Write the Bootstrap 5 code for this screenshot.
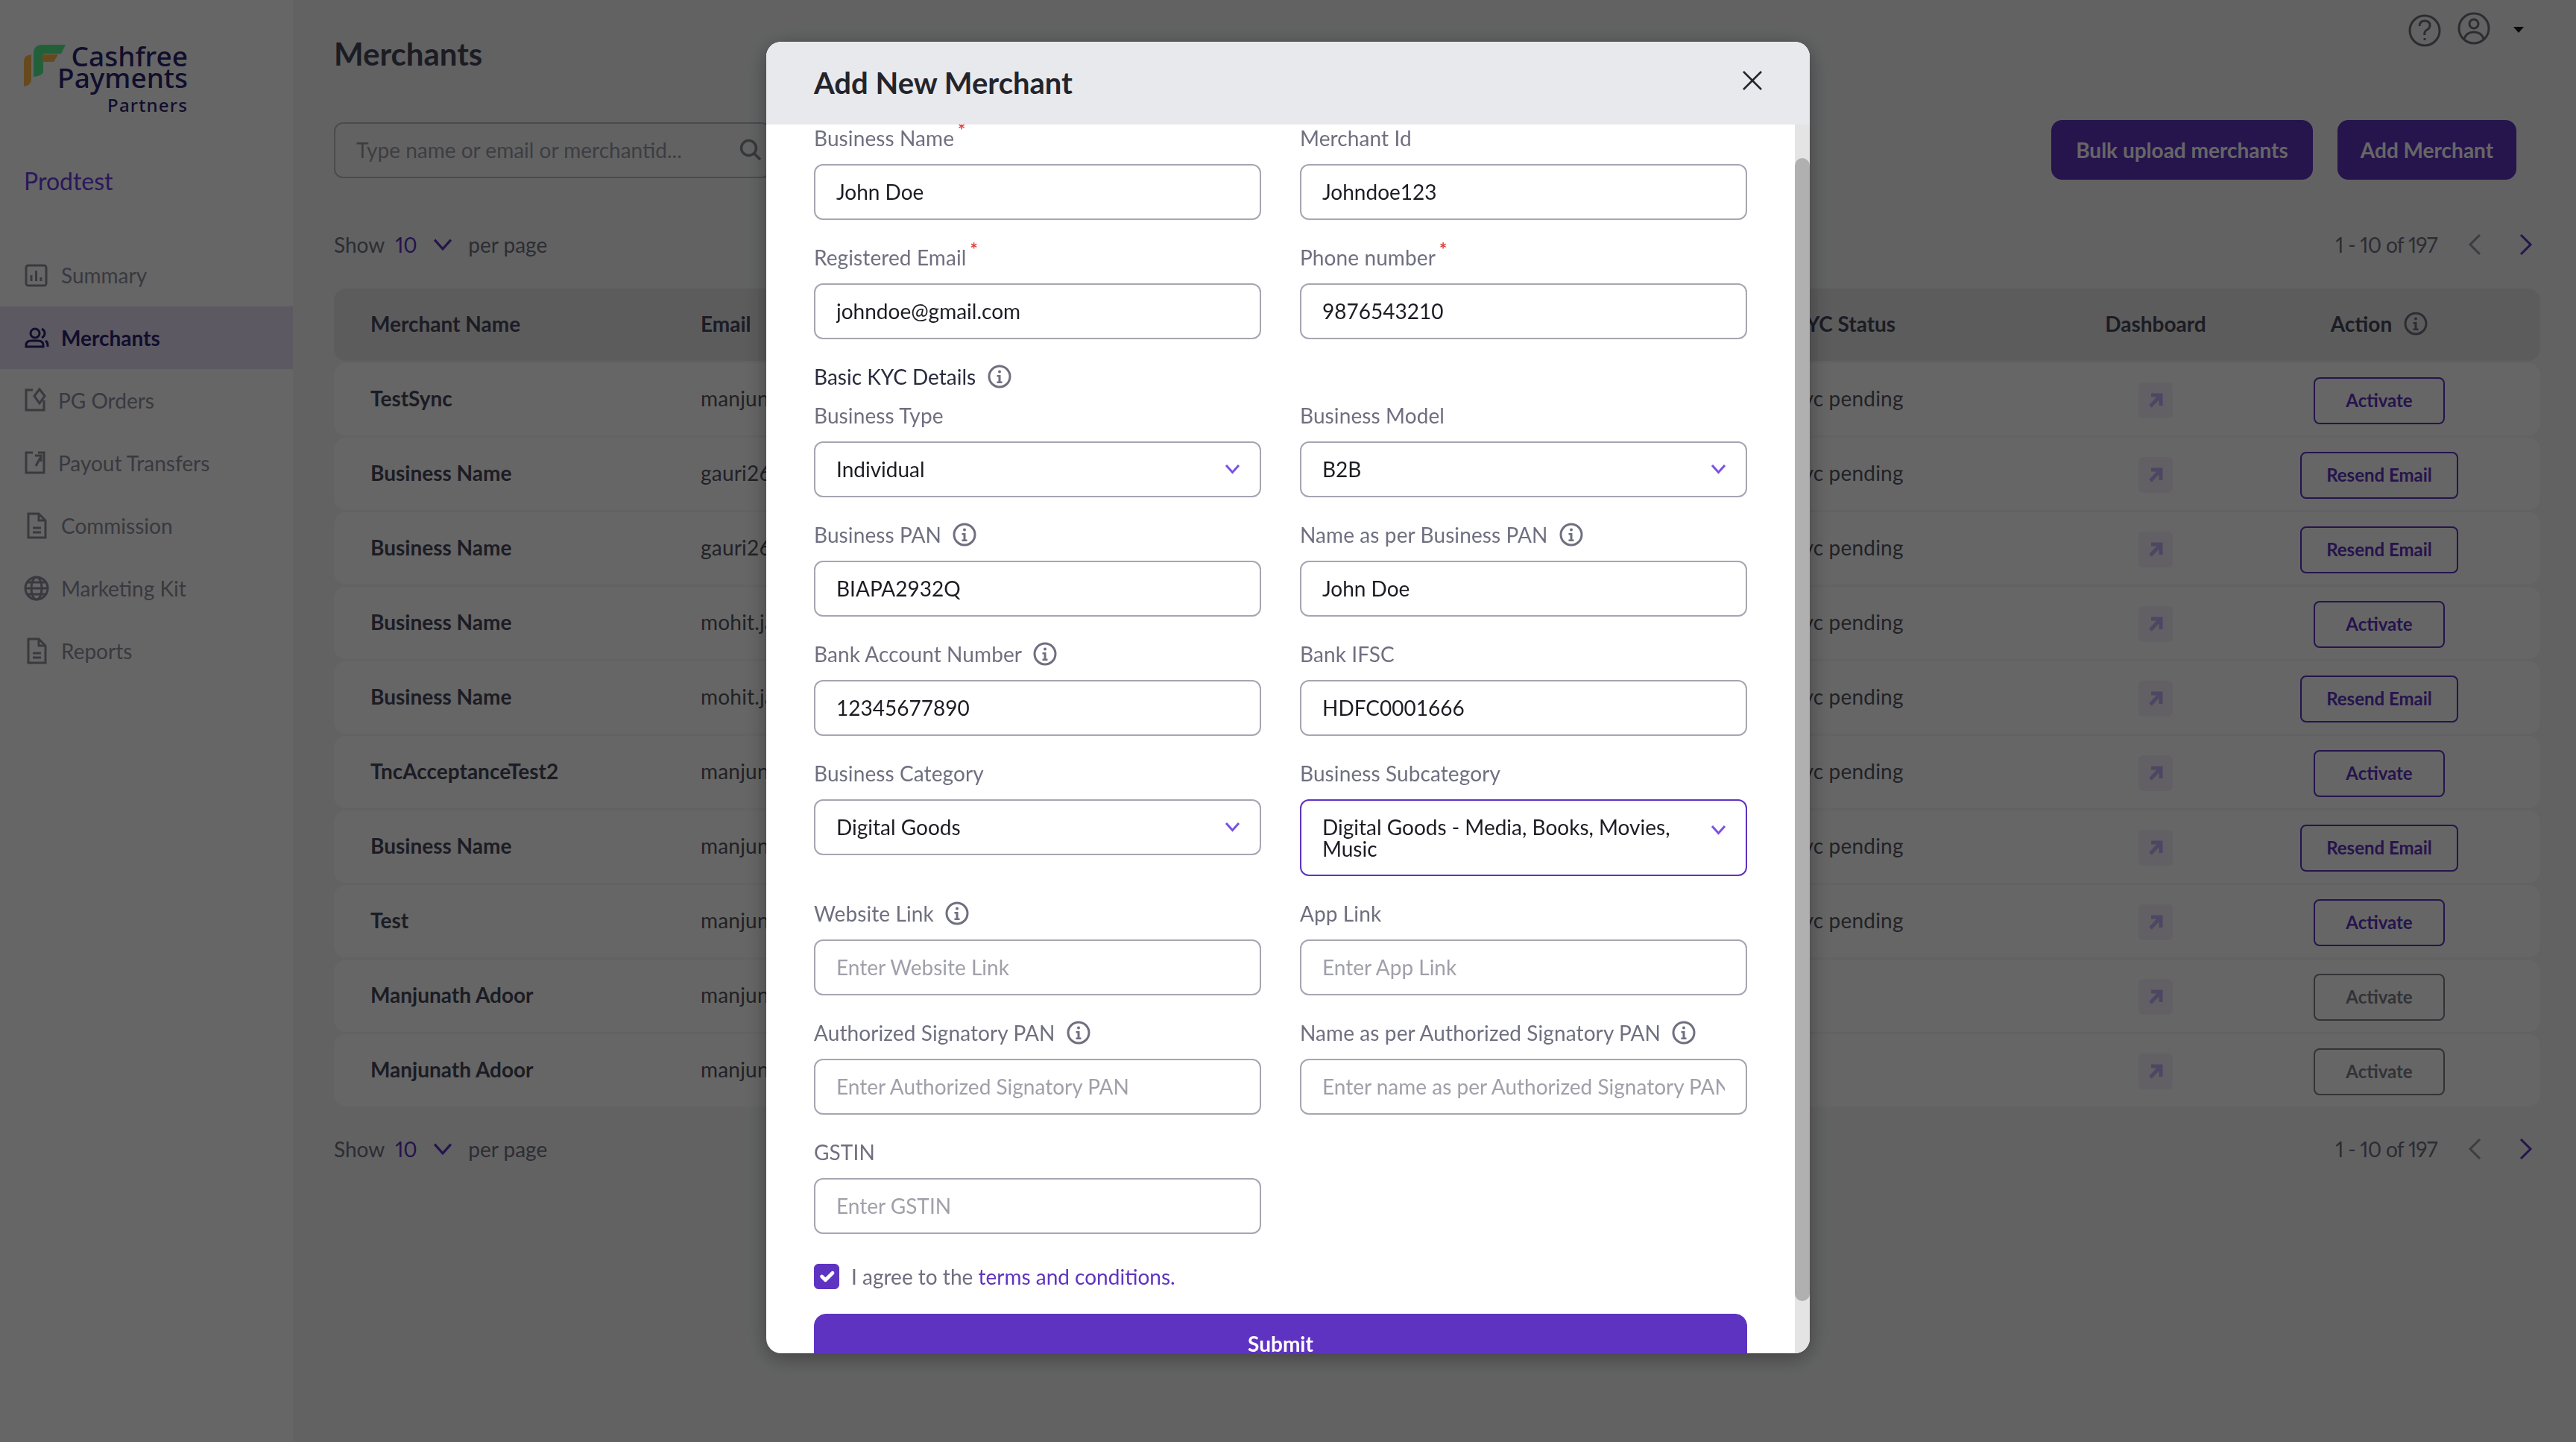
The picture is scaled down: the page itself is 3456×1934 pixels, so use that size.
<!DOCTYPE html>
<html lang="en">
<head>
<meta charset="utf-8">
<title>Merchants</title>
<link href="https://cdn.jsdelivr.net/npm/bootstrap@5.3.0/dist/css/bootstrap.min.css" rel="stylesheet">
<style>
html,body{height:100%;overflow:hidden}
body{font-family:Lato,"Liberation Sans",sans-serif;font-size:28px;background:#f5f6f8;color:#2a2a3a}
.app-shell{height:1934px}
.side-nav{width:393px;flex:none;background:#fff}
.brand-wrap{display:grid;width:220px;margin:60px 0 0 32px;font-family:"Noto Sans",sans-serif;color:#2b2470;text-align:right;font-weight:500}
.brand-wrap>*{grid-area:1/1}
.brand-mark{width:56px;height:56px}
.brand-text{line-height:29px;font-size:37px}
.brand-sub{font-size:24px;letter-spacing:1.2px;line-height:30px;margin-top:8px}
.brand-sub,.brand-text{display:block}
.org-name{margin:67px 0 0 32px;font-size:32px;line-height:40px;color:#6a3ee0}
.nav-stack{margin-top:64px}
.nav-entry{height:84px;padding-left:32px;gap:16px;color:#8f8f9e;font-size:28px}
.nav-entry.tight{gap:12px}
.nav-entry svg{width:34px;height:36px;flex:none;stroke:currentColor;fill:none;stroke-width:3}
.nav-entry.is-on{background:#e6dff4;color:#2b2470;font-weight:700}
.page-main{min-width:0;padding:0 48px 0 55px}
.top-row{height:161px}
.page-title{font-size:42px;font-weight:700;line-height:52px;margin:46px 0 0;color:#48485a}
.top-icons{gap:20px;margin:16px 22px 0 0;color:#70707c}
.top-icons svg{width:46px;height:48px;fill:none;stroke:currentColor;stroke-width:3}
.top-caret{width:0;height:0;border:7px solid transparent;border-top:8px solid #1a1a1a;margin:20px 0 0 10px}
.tool-row{height:80px}
.search-box{width:586px;height:75px;border:2px solid #bcbcc4;border-radius:12px;padding:0 10px 0 28px;color:#9a9aa4;background:transparent}
.search-box svg{width:30px;height:30px;fill:none;stroke:#8c8c96;stroke-width:3.500}
.cta-group{gap:33px;margin-right:32px}
.cta-btn{height:80px;border-radius:14px;background:#5f33c1;border-color:#5f33c1;color:#fff;font-size:28px;font-weight:700;padding:0}
.cta-wide{width:351px}
.cta-narrow{width:240px}
.pager-row{height:40px;margin:67px 0 39px;color:#70707e}
.pager-row.at-end{margin:37px 0 0}
.count-num{color:#5f33c1;width:34px;margin:0 14px;font-variant-numeric:proportional-nums}
.per-chev{width:32px;height:18px;margin-right:18px;fill:none;stroke:#5f33c1;stroke-width:2.500}
.pager-r{margin-right:10px}
.pager-r span{font-variant-numeric:proportional-nums;letter-spacing:-.7px}
.pager-r svg{width:18px;height:30px;fill:none;stroke-width:3;margin-left:41px}
.pager-r svg+svg{margin-left:51px}
.grid-stack{gap:3px}
.grid-line{display:grid;grid-template-columns:443px 1464px 356px 264px 336px;padding:0 48px 3px 49px;height:97px;align-items:center;background:#fff;border-radius:16px;color:#55555f;overflow:hidden;letter-spacing:.2px}
.grid-line.head-line{background:#e6e6e9;color:#48485a;font-weight:700;letter-spacing:0}
.grid-line .who{font-weight:700;color:#48485a;letter-spacing:0}
.mid-cell{justify-self:center}
.go-box{width:46px;height:48px;margin-top:6px;border-radius:6px;background:#f4f1fa;display:flex;align-items:center;justify-content:center}
.go-box svg{width:20px;height:20px;fill:none;stroke:#c4aef5;stroke-width:5}
.row-act{height:63px;min-width:176px;margin-top:6px;padding:0 33px;font-size:24px;font-weight:700;border:2px solid #5f33c1;color:#5f33c1;border-radius:8px;background:transparent}
.row-act.is-off{border-color:#80808a;color:#80808a}
.tip-i{width:32px;height:32px;flex:none;color:#6f6f80}
.dim-backdrop{--bs-backdrop-opacity:.6}
.merchant-dialog{max-width:1400px;margin:56px 0 0 1028px;width:1400px}
.merchant-content{height:1759px;border:0;border-radius:20px;overflow:hidden;box-shadow:0 6px 30px rgba(0,0,0,.35)}
.merchant-head{height:111px;flex:none;padding:0 63px 0 64px;background:#e8e9ec;border:0;border-radius:0}
.merchant-head h5{font-size:40px;font-weight:700;color:#24242c;margin:0 0 2px}
.close-x{width:28px;height:28px;padding:0;border:0;background:transparent;margin-bottom:7px}
.close-x svg{display:block;width:28px;height:28px;stroke:#24242c;stroke-width:2.5}
.merchant-body{padding:0 84px 0 64px;overflow:hidden;flex:1;position:relative}
.field-row{--bs-gutter-x:52px;--bs-gutter-y:0}
.field-cell{margin-bottom:32px}
.field-lab{display:flex;align-items:center;gap:15px;height:36px;margin:0 0 17px;color:#6f6f80;font-size:28px;letter-spacing:.1px}
.field-lab sup{color:#e53935;font-size:24px;font-weight:700;top:-.4em;margin-left:-10px}
.kyc-lab{display:flex;align-items:center;gap:16px;height:36px;margin:0 0 16px;color:#2a2a3e}
.field-in{height:75px;border:2px solid #a6a6b2;border-radius:12px;padding:0 28px 2px;font-size:28px;color:#1c1c24;background:#fff}
.field-in::placeholder{color:#a0a0aa}
.pick-in{display:flex;align-items:center;justify-content:space-between;padding-right:26px}
.pick-in svg{width:21px;height:14px;flex:none;fill:none;stroke:#7b52e0;stroke-width:3}
.pick-in.is-tall{height:103px;border-color:#5f33c1;align-items:flex-start;padding-top:21px;line-height:29px}
.pick-in.is-tall svg{margin-top:11px}
.agree-check{padding:0;margin:4px 0 29px;display:flex;align-items:center;gap:16px;min-height:34px;color:#6f6f80}
.agree-check .form-check-input{width:34px;height:34px;margin:0;float:none;border-radius:6px;background-color:#5f33c1;border-color:#5f33c1}
.agree-check a{color:#5f33c1;text-decoration:none}
.submit-btn{width:100%;height:80px;background:#5f33c1;border-color:#5f33c1;color:#fff;font-size:28px;font-weight:700;border-radius:16px}
.fake-track{position:absolute;top:0;right:0;bottom:0;width:20px;background:#e4e4e4}
.fake-thumb{position:absolute;top:45px;left:0;width:20px;height:1533px;border-radius:10px;background:#b0b0b0}
</style>
</head>
<body>
<svg width="0" height="0" class="d-block" aria-hidden="true">
  <symbol id="ic-info" viewBox="0 0 32 32"><circle cx="16" cy="16" r="14" fill="none" stroke="currentColor" stroke-width="3"/><circle cx="16" cy="9.500" r="2" fill="currentColor"/><path d="M12.500 14h5v8.500h2V25h-7v-2.500h2v-6h-2z" fill="currentColor"/></symbol>
  <symbol id="ic-down" viewBox="0 0 21 14"><path d="M2 2l8.500 9.500L19 2"/></symbol>
  <symbol id="ic-go" viewBox="0 0 20 20"><path d="M4 3h13v14M17 3L3 18"/></symbol>
  <symbol id="ic-prev" viewBox="0 0 18 30"><path d="M16 2L3 15l13 13"/></symbol>
  <symbol id="ic-next" viewBox="0 0 18 30"><path d="M2 2l13 13L2 28"/></symbol>
  <symbol id="ic-doc" viewBox="0 0 34 36"><path d="M6 2h14l9 9v23H6zM20 2v9h9M12 21h11M12 27h11"/></symbol>
</svg>
<div class="app-shell d-flex">
  <aside class="side-nav d-flex flex-column">
    <div class="brand-wrap">
      <svg class="brand-mark" viewBox="0 0 56 56"><path d="M0 56V22Q0 14 10 13V47Q10 54 0 56Z" fill="#ffb84a"/><path d="M13 43V12Q13 0 25 0H56L50 12H26V37Q24 42 13 43Z" fill="#55f091"/><path d="M25 13H46L40 23H25Z" fill="#ffb84a"/></svg>
      <div><span class="brand-text">Cashfree</span><span class="brand-text">Payments</span><span class="brand-sub">Partners</span></div>
    </div>
    <div class="org-name">Prodtest</div>
    <nav class="nav-stack">
      <a class="nav-entry d-flex align-items-center text-decoration-none"><svg viewBox="0 0 34 36"><rect x="3" y="5" width="27" height="27" rx="3"/><path d="M10 26v-8M16.500 26V12M23 26v-5"/></svg>Summary</a>
      <a class="nav-entry is-on d-flex align-items-center text-decoration-none"><svg viewBox="0 0 34 36"><circle cx="15" cy="12" r="6"/><path d="M3 30v-2q0-6 7-6h9q7 0 7 6v2zM24 6q4 2 4 6t-4 6M29 22q3 2 3 6v2"/></svg>Merchants</a>
      <a class="nav-entry tight d-flex align-items-center text-decoration-none"><svg viewBox="0 0 34 36"><path d="M12 4H3v27h24V18M21 3l7 9-7 10-7-10z"/></svg>PG Orders</a>
      <a class="nav-entry tight d-flex align-items-center text-decoration-none"><svg viewBox="0 0 34 36"><path d="M12 4H3v27h24V4h-8M16 22l6-11M15 8h8v8"/></svg>Payout Transfers</a>
      <a class="nav-entry d-flex align-items-center text-decoration-none"><svg><use href="#ic-doc"/></svg>Commission</a>
      <a class="nav-entry d-flex align-items-center text-decoration-none"><svg viewBox="0 0 34 36"><circle cx="17" cy="18" r="15"/><ellipse cx="17" cy="18" rx="7" ry="15"/><path d="M2 18h30M4 10h26M4 26h26"/></svg>Marketing Kit</a>
      <a class="nav-entry d-flex align-items-center text-decoration-none"><svg><use href="#ic-doc"/></svg>Reports</a>
    </nav>
  </aside>
  <main class="page-main flex-grow-1">
    <div class="top-row d-flex justify-content-between align-items-start">
      <h1 class="page-title">Merchants</h1>
      <div class="top-icons d-flex align-items-start">
        <svg viewBox="0 0 46 48"><circle cx="23" cy="25" r="20"/><path d="M16 19q0-7 7-7t7 6q0 4-4 6t-3 7M23 35v3"/></svg>
        <svg viewBox="0 0 46 48"><circle cx="23" cy="22" r="20"/><circle cx="23" cy="16" r="6"/><path d="M10 36q3-9 13-9t13 9"/></svg>
        <span class="top-caret"></span>
      </div>
    </div>
    <div class="tool-row d-flex justify-content-between align-items-center">
      <div class="search-box d-flex align-items-center justify-content-between"><span>Type name or email or merchantid...</span><svg viewBox="0 0 30 30"><circle cx="12.500" cy="12.500" r="10"/><path d="M20 20l8 8"/></svg></div>
      <div class="cta-group d-flex">
        <button class="btn cta-btn cta-wide" type="button">Bulk upload merchants</button>
        <button class="btn cta-btn cta-narrow" type="button">Add Merchant</button>
      </div>
    </div>
    <div class="pager-row d-flex justify-content-between align-items-center">
      <div class="d-flex align-items-center"><span>Show</span><span class="count-num">10</span><svg class="per-chev"><use href="#ic-down"/></svg><span>per page</span></div>
      <div class="pager-r d-flex align-items-center"><span>1 - 10 of 197</span><svg stroke="#9a9aa4"><use href="#ic-prev"/></svg><svg stroke="#5f33c1"><use href="#ic-next"/></svg></div>
    </div>
    <div class="grid-stack d-flex flex-column">
      <div class="grid-line head-line"><div>Merchant Name</div><div>Email</div><div>KYC Status</div><div class="mid-cell">Dashboard</div><div class="mid-cell d-flex align-items-center gap-3">Action <svg class="tip-i"><use href="#ic-info"/></svg></div></div>
      <div class="grid-line"><div class="who">TestSync</div><div>manjunath.adoor@cashfree.com</div><div>kyc pending</div><div class="mid-cell go-box"><svg><use href="#ic-go"/></svg></div><button class="btn row-act mid-cell" type="button">Activate</button></div>
      <div class="grid-line"><div class="who">Business Name</div><div>gauri26@cashfree.com</div><div>kyc pending</div><div class="mid-cell go-box"><svg><use href="#ic-go"/></svg></div><button class="btn row-act mid-cell" type="button">Resend Email</button></div>
      <div class="grid-line"><div class="who">Business Name</div><div>gauri26@cashfree.com</div><div>kyc pending</div><div class="mid-cell go-box"><svg><use href="#ic-go"/></svg></div><button class="btn row-act mid-cell" type="button">Resend Email</button></div>
      <div class="grid-line"><div class="who">Business Name</div><div>mohit.jain@cashfree.com</div><div>kyc pending</div><div class="mid-cell go-box"><svg><use href="#ic-go"/></svg></div><button class="btn row-act mid-cell" type="button">Activate</button></div>
      <div class="grid-line"><div class="who">Business Name</div><div>mohit.jain@cashfree.com</div><div>kyc pending</div><div class="mid-cell go-box"><svg><use href="#ic-go"/></svg></div><button class="btn row-act mid-cell" type="button">Resend Email</button></div>
      <div class="grid-line"><div class="who">TncAcceptanceTest2</div><div>manjunath.adoor@cashfree.com</div><div>kyc pending</div><div class="mid-cell go-box"><svg><use href="#ic-go"/></svg></div><button class="btn row-act mid-cell" type="button">Activate</button></div>
      <div class="grid-line"><div class="who">Business Name</div><div>manjunath.adoor@cashfree.com</div><div>kyc pending</div><div class="mid-cell go-box"><svg><use href="#ic-go"/></svg></div><button class="btn row-act mid-cell" type="button">Resend Email</button></div>
      <div class="grid-line"><div class="who">Test</div><div>manjunath.adoor@cashfree.com</div><div>kyc pending</div><div class="mid-cell go-box"><svg><use href="#ic-go"/></svg></div><button class="btn row-act mid-cell" type="button">Activate</button></div>
      <div class="grid-line"><div class="who">Manjunath Adoor</div><div>manjunath.adoor@cashfree.com</div><div></div><div class="mid-cell go-box"><svg><use href="#ic-go"/></svg></div><button class="btn row-act is-off mid-cell" type="button">Activate</button></div>
      <div class="grid-line"><div class="who">Manjunath Adoor</div><div>manjunath.adoor@cashfree.com</div><div></div><div class="mid-cell go-box"><svg><use href="#ic-go"/></svg></div><button class="btn row-act is-off mid-cell" type="button">Activate</button></div>
    </div>
    <div class="pager-row at-end d-flex justify-content-between align-items-center">
      <div class="d-flex align-items-center"><span>Show</span><span class="count-num">10</span><svg class="per-chev"><use href="#ic-down"/></svg><span>per page</span></div>
      <div class="pager-r d-flex align-items-center"><span>1 - 10 of 197</span><svg stroke="#9a9aa4"><use href="#ic-prev"/></svg><svg stroke="#5f33c1"><use href="#ic-next"/></svg></div>
    </div>
  </main>
</div>
<div class="modal-backdrop dim-backdrop show"></div>
<div class="modal d-block" role="dialog">
  <div class="modal-dialog merchant-dialog">
    <div class="modal-content merchant-content">
      <div class="modal-header merchant-head">
        <h5 class="modal-title">Add New Merchant</h5>
        <button class="close-x ms-auto" type="button" aria-label="Close"><svg viewBox="0 0 28 28"><path d="M2 2l24 24M26 2L2 26"/></svg></button>
      </div>
      <div class="modal-body merchant-body">
        <div class="row field-row">
          <div class="col-6 field-cell"><label class="field-lab">Business Name <sup>*</sup></label><input class="form-control field-in" value="John Doe"></div>
          <div class="col-6 field-cell"><label class="field-lab">Merchant Id</label><input class="form-control field-in" value="Johndoe123"></div>
          <div class="col-6 field-cell"><label class="field-lab">Registered Email <sup>*</sup></label><input class="form-control field-in" value="johndoe@gmail.com"></div>
          <div class="col-6 field-cell"><label class="field-lab">Phone number <sup>*</sup></label><input class="form-control field-in" value="9876543210"></div>
        </div>
        <div class="kyc-lab">Basic KYC Details <svg class="tip-i"><use href="#ic-info"/></svg></div>
        <div class="row field-row">
          <div class="col-6 field-cell"><label class="field-lab">Business Type</label><div class="form-control field-in pick-in">Individual<svg><use href="#ic-down"/></svg></div></div>
          <div class="col-6 field-cell"><label class="field-lab">Business Model</label><div class="form-control field-in pick-in">B2B<svg><use href="#ic-down"/></svg></div></div>
          <div class="col-6 field-cell"><label class="field-lab">Business PAN <svg class="tip-i"><use href="#ic-info"/></svg></label><input class="form-control field-in" value="BIAPA2932Q"></div>
          <div class="col-6 field-cell"><label class="field-lab">Name as per Business PAN <svg class="tip-i"><use href="#ic-info"/></svg></label><input class="form-control field-in" value="John Doe"></div>
          <div class="col-6 field-cell"><label class="field-lab">Bank Account Number <svg class="tip-i"><use href="#ic-info"/></svg></label><input class="form-control field-in" value="12345677890"></div>
          <div class="col-6 field-cell"><label class="field-lab">Bank IFSC</label><input class="form-control field-in" value="HDFC0001666"></div>
          <div class="col-6 field-cell"><label class="field-lab">Business Category</label><div class="form-control field-in pick-in">Digital Goods<svg><use href="#ic-down"/></svg></div></div>
          <div class="col-6 field-cell"><label class="field-lab">Business Subcategory</label><div class="form-control field-in pick-in is-tall"><span>Digital Goods - Media, Books, Movies,<br>Music</span><svg><use href="#ic-down"/></svg></div></div>
          <div class="col-6 field-cell"><label class="field-lab">Website Link <svg class="tip-i"><use href="#ic-info"/></svg></label><input class="form-control field-in" placeholder="Enter Website Link"></div>
          <div class="col-6 field-cell"><label class="field-lab">App Link</label><input class="form-control field-in" placeholder="Enter App Link"></div>
          <div class="col-6 field-cell"><label class="field-lab">Authorized Signatory PAN <svg class="tip-i"><use href="#ic-info"/></svg></label><input class="form-control field-in" placeholder="Enter Authorized Signatory PAN"></div>
          <div class="col-6 field-cell"><label class="field-lab">Name as per Authorized Signatory PAN <svg class="tip-i"><use href="#ic-info"/></svg></label><input class="form-control field-in" placeholder="Enter name as per Authorized Signatory PAN"></div>
          <div class="col-6 field-cell"><label class="field-lab">GSTIN</label><input class="form-control field-in" placeholder="Enter GSTIN"></div>
        </div>
        <div class="form-check agree-check"><input class="form-check-input" type="checkbox" checked id="agree"><label for="agree">I agree to the <a href="#">terms and conditions.</a></label></div>
        <button class="btn submit-btn" type="button">Submit</button>
        <div class="fake-track"><div class="fake-thumb"></div></div>
      </div>
    </div>
  </div>
</div>
<script src="https://cdn.jsdelivr.net/npm/bootstrap@5.3.0/dist/js/bootstrap.bundle.min.js"></script>
</body>
</html>
